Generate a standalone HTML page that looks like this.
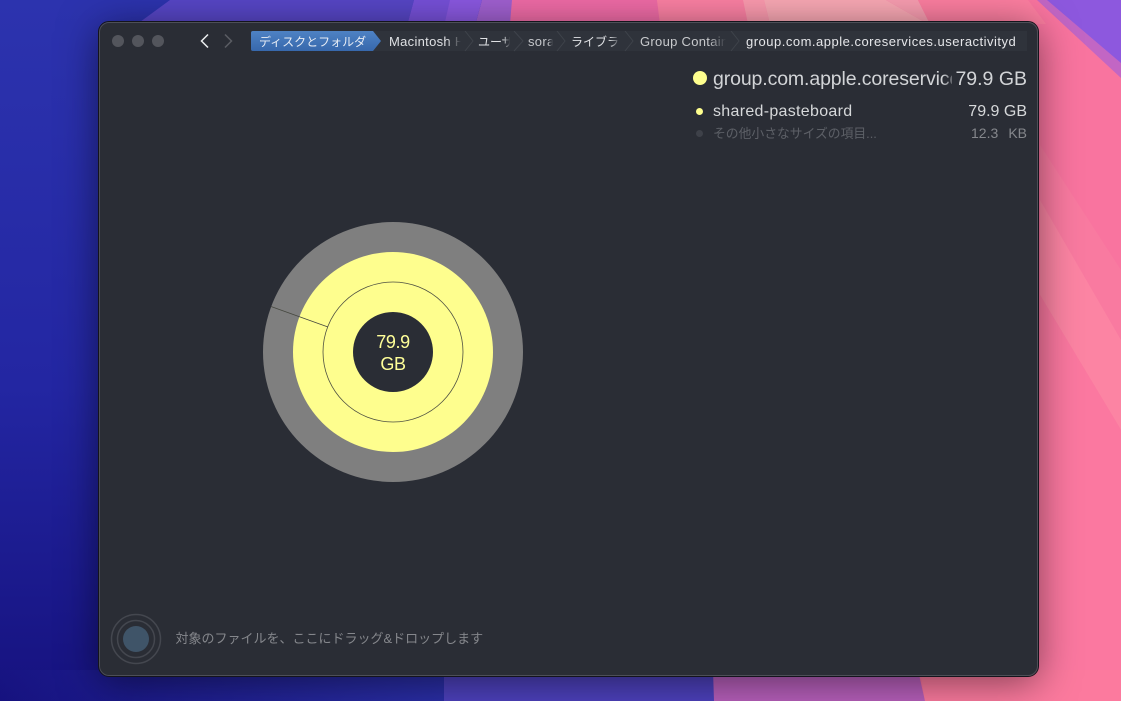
<!DOCTYPE html>
<html lang="ja">
<head>
<meta charset="utf-8">
<title>ディスクとフォルダ</title>
<style>
html,body{margin:0;padding:0;width:1121px;height:701px;overflow:hidden;background:#2a2aa8}
*{box-sizing:border-box}
body{position:relative;font-family:"Liberation Sans","Noto Sans CJK JP",sans-serif}
.bg{position:absolute;left:0;top:0}
.win{position:absolute;left:99px;top:22px;width:939px;height:654px;border-radius:10px;background:#2a2d35;border:1px solid #4d4f57;outline:1px solid #14141c;box-shadow:0 6px 40px rgba(0,0,0,.5)}
.dot{position:absolute;border-radius:50%}
.t{position:absolute;white-space:nowrap;overflow:hidden}
.seg{position:absolute;top:33px;height:17px;line-height:17px;font-size:13px;letter-spacing:.3px;color:#dfe1e4;white-space:nowrap;overflow:hidden}
.jp{top:34px;font-size:12px;letter-spacing:0}
.fade{-webkit-mask-image:linear-gradient(90deg,#000 80%,transparent 100%);mask-image:linear-gradient(90deg,#000 80%,transparent 100%)}
svg{position:absolute}
</style>
</head>
<body>
<svg class="bg" width="1121" height="701" viewBox="0 0 1121 701">
<defs>
<linearGradient id="b1" x1="0" y1="0" x2="0" y2="1"><stop offset="0" stop-color="#2c33ae"/><stop offset=".55" stop-color="#2326a2"/><stop offset="1" stop-color="#16127f"/></linearGradient>
<linearGradient id="b2" x1="0" y1="0" x2="1" y2="0"><stop offset="0" stop-color="#2a2ea6" stop-opacity="0"/><stop offset="1" stop-color="#2a2ea6"/></linearGradient>
</defs>
<rect width="1121" height="701" fill="url(#b1)"/>
<polygon points="140,22 170,0 414,0 408,22" fill="#5746c6"/>
<polygon points="0,670 445,670 445,701 0,701" fill="url(#b2)"/>
<polygon points="414,0 450,0 450,22 408,22" fill="#7650d8"/>
<polygon points="450,0 482,0 476,22 445,22" fill="#8a58e0"/>
<polygon points="482,0 514,0 512,22 476,22" fill="#a060d0"/>
<polygon points="512,0 1121,0 1121,701 512,701" fill="#f9749f"/>
<polygon points="512,0 657,0 660,24 510,24" fill="#ef6ba6"/>
<polygon points="657,0 743,0 748,24 660,24" fill="#fb80a3"/>
<polygon points="743,0 764,0 770,24 748,24" fill="#fb9aae"/>
<polygon points="764,0 886,0 928,24 770,24" fill="#f9a8b4"/>
<polygon points="886,0 918,0 930,24 928,24" fill="#f89db0"/>
<polygon points="918,0 1028,0 1046,24 930,24" fill="#fc7ea0"/>
<polygon points="1037,0 1121,0 1121,78" fill="#c266c4"/>
<polygon points="1047,0 1121,0 1121,63" fill="#8d58de"/>
<polygon points="1040,145 1121,270 1121,380 1040,200" fill="#f97aa0"/>
<polygon points="1040,200 1121,340 1121,430 1040,295" fill="#fc84a3"/>
<polygon points="1040,295 1121,430 1121,701 1040,701" fill="#fb78a0"/>
<polygon points="444,670 715,670 714,701 444,701" fill="#4d41bd"/>
<polygon points="713,670 918,670 925,701 714,701" fill="#b75fbb"/>
<polygon points="920,670 1121,670 1121,701 925,701" fill="#fc7a9e"/>
</svg>

<div class="win"></div>

<div class="dot" style="left:112px;top:35px;width:12px;height:12px;background:#53555c"></div>
<div class="dot" style="left:132px;top:35px;width:12px;height:12px;background:#53555c"></div>
<div class="dot" style="left:152px;top:35px;width:12px;height:12px;background:#53555c"></div>

<svg style="left:195px;top:30px" width="45" height="22" viewBox="0 0 45 22">
<path d="M13 4.500 L6.500 11 L13 17.500" fill="none" stroke="#eceef0" stroke-width="1.500"/>
<path d="M30 4.500 L36.500 11 L30 17.500" fill="none" stroke="#5a5c63" stroke-width="1.500"/>
</svg>

<svg style="left:251px;top:31px" width="776" height="21" viewBox="0 0 776 21">
<defs><linearGradient id="bl" x1="0" y1="0" x2="0" y2="1"><stop offset="0" stop-color="#4e82c4"/><stop offset="1" stop-color="#3768ac"/></linearGradient></defs>
<rect x="0" y="0" width="776" height="20" fill="#2f333b"/>
<path d="M2 0 H122 L130 10 L122 20 H2 Q0 20 0 18 V2 Q0 0 2 0Z" fill="url(#bl)"/>
<g fill="none" stroke="#3f434b" stroke-width="1">
<path d="M214 0 L222 10 L214 20"/>
<path d="M263 0 L272 10 L263 20"/>
<path d="M306 0 L314 10 L306 20"/>
<path d="M374 0 L382 10 L374 20"/>
<path d="M480 0 L488 10 L480 20"/>
</g>
</svg>

<div class="seg jp" style="left:259px;width:112px;color:#e8edf5">ディスクとフォルダ</div>
<div class="seg fade" style="left:389px;width:72px">Macintosh HD</div>
<div class="seg jp fade" style="left:478px;width:32px">ユーザ</div>
<div class="seg fade" style="left:528px;width:25px;color:#c5c7cb">sora</div>
<div class="seg jp fade" style="left:571px;width:49px">ライブラリ</div>
<div class="seg fade" style="left:640px;width:86px;color:#c8cacd">Group Containers</div>
<div class="seg" style="left:746px;width:276px;letter-spacing:.5px;color:#e6e7ea">group.com.apple.coreservices.useractivityd</div>

<div class="dot" style="left:693px;top:71px;width:14px;height:14px;background:#fefe8e"></div>
<div class="t" style="left:713px;top:67px;width:239px;height:25px;line-height:25px;font-size:19.500px;letter-spacing:-.12px;color:#d2d4d7;-webkit-mask-image:linear-gradient(90deg,#000 96%,rgba(0,0,0,.35) 100%);mask-image:linear-gradient(90deg,#000 96%,rgba(0,0,0,.35) 100%)">group.com.apple.coreservices.useractivityd</div>
<div class="t" style="right:94px;top:67px;height:25px;line-height:25px;font-size:19.500px;color:#d2d4d7">79.9 GB</div>

<div class="dot" style="left:696px;top:108px;width:7px;height:7px;background:#fefe8e"></div>
<div class="t" style="left:713px;top:102px;height:20px;line-height:20px;font-size:16px;letter-spacing:.3px;color:#d6d8da">shared-pasteboard</div>
<div class="t" style="right:94px;top:102px;height:20px;line-height:20px;font-size:16px;color:#d6d8da">79.9 GB</div>

<div class="dot" style="left:696px;top:130px;width:7px;height:7px;background:#3e4149"></div>
<div class="t" style="left:713px;top:125px;height:18px;line-height:18px;font-size:12.800px;color:#5d6067">その他小さなサイズの項目...</div>
<div class="t" style="left:971px;top:124px;height:18px;line-height:18px;font-size:14px;color:#85878c">12.3</div>
<div class="t" style="right:94px;top:124px;height:18px;line-height:18px;font-size:14px;color:#85878c">KB</div>

<svg style="left:255px;top:215px" width="275" height="275" viewBox="255 215 275 275">
<circle cx="393" cy="352" r="130" fill="#7f7f7f"/>
<circle cx="393" cy="352" r="100" fill="#fefe8e"/>
<circle cx="393" cy="352" r="70" fill="none" stroke="#4d4f42" stroke-width=".8"/>
<path d="M271 306.500 L328 327" fill="none" stroke="#45473f" stroke-width=".8"/>
<circle cx="393" cy="352" r="40" fill="#2a2d35"/>
</svg>
<div class="t" style="left:353px;top:331px;width:80px;height:23px;line-height:23px;text-align:center;font-size:18px;letter-spacing:-.4px;color:#ffff99">79.9</div>
<div class="t" style="left:353px;top:353px;width:80px;height:23px;line-height:23px;text-align:center;font-size:18px;letter-spacing:-.4px;color:#ffff99">GB</div>

<svg style="left:110px;top:613px" width="52" height="52" viewBox="0 0 52 52">
<circle cx="26" cy="26" r="24.500" fill="none" stroke="#44474f" stroke-width="1.500"/>
<circle cx="26" cy="26" r="18.500" fill="none" stroke="#44474f" stroke-width="1.500"/>
<circle cx="26" cy="26" r="13" fill="#3f5468"/>
</svg>
<div class="t" style="left:175.500px;top:630px;height:18px;line-height:18px;font-size:13px;color:#85878c">対象のファイルを、ここにドラッグ&amp;ドロップします</div>
</body>
</html>
